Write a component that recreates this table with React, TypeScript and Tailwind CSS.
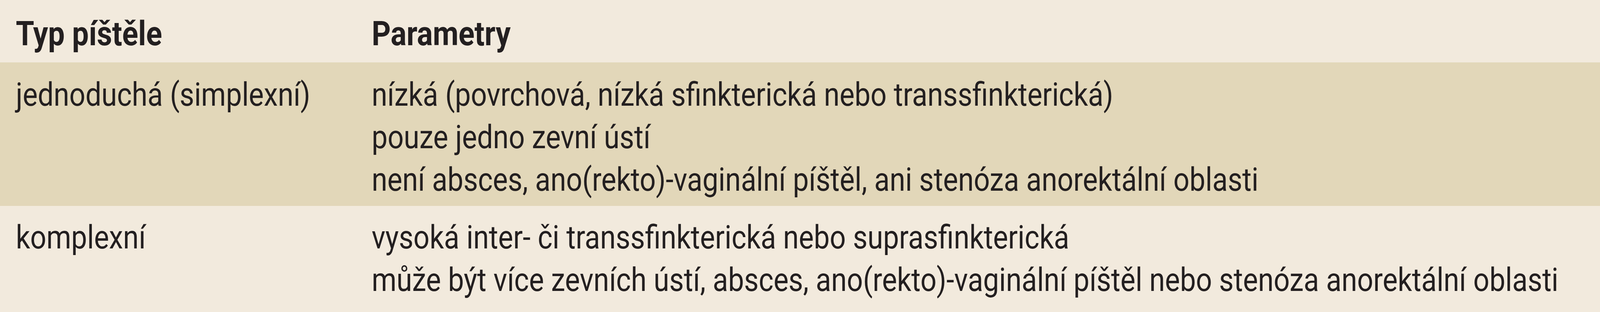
import React, { useEffect, useState } from "react";

const rows = [
  {
    type: "jednoduchá (simplexní)",
    params: [
      "nízká (povrchová, nízká sfinkterická nebo transsfinkterická)",
      "pouze jedno zevní ústí",
      "není absces, ano(rekto)-vaginální píštěl, ani stenóza anorektální oblasti",
    ],
    cls: "bg-[#e2d7b9] h-[368px] pt-[28px]",
  },
  {
    type: "komplexní",
    params: [
      "vysoká inter- či transsfinkterická nebo suprasfinkterická",
      "může být více zevních ústí, absces, ano(rekto)-vaginální píštěl nebo stenóza anorektální oblasti",
    ],
    cls: "bg-[#f2eadd] h-[272px] pt-[26px]",
  },
];

const DESIGN_W = 4744;

function useFitScale() {
  const get = () =>
    typeof window === "undefined" ? 1 : Math.min(1, window.innerWidth / DESIGN_W);
  const [k, setK] = useState(get);
  useEffect(() => {
    const on = () => setK(get());
    window.addEventListener("resize", on);
    return () => window.removeEventListener("resize", on);
  }, []);
  return k;
}

export default function App() {
  const k = useFitScale();
  return (
    <div className="w-full h-[800px] overflow-hidden bg-[#f2eadd]">
      <div
        className="w-[4744px] h-[800px] origin-top-left bg-[#f2eadd] text-[#231f20] font-['Roboto',sans-serif] text-[84px] leading-[109px]"
        style={{ transform: `scaleX(${k})` }}
      >
        <div className="grid grid-cols-[1102px_minmax(0,1fr)] h-[160px] pt-[31px] bg-[#f2eadd] font-bold text-[88px]">
          <div className="pl-[47px] whitespace-nowrap">Typ píštěle</div>
          <div className="whitespace-nowrap">Parametry</div>
        </div>
        {rows.map((r) => (
          <div key={r.type} className={`grid grid-cols-[1102px_minmax(0,1fr)] ${r.cls}`}>
            <div className="pl-[47px] whitespace-nowrap">{r.type}</div>
            <div className="flex flex-col">
              {r.params.map((p) => (
                <div key={p} className="whitespace-nowrap">
                  {p}
                </div>
              ))}
            </div>
          </div>
        ))}
      </div>
    </div>
  );
}
